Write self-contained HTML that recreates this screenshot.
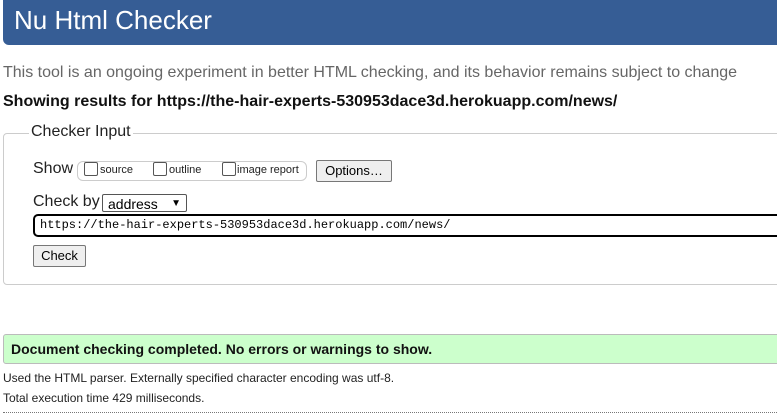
<!DOCTYPE html>
<html><head><style>
body{margin:0;width:777px;height:417px;overflow:hidden;background:#fff;font-family:"Liberation Sans",Arial,sans-serif;position:relative}
.a{position:absolute;white-space:nowrap}
</style></head><body>
<div class="a" style="left:3px;top:0;width:790px;height:45px;background:#365d95;border-radius:0 0 6px 6px"></div>
<div class="a" style="left:14px;top:5px;color:#fff;font-size:26px">Nu Html Checker</div>
<div class="a" style="left:3px;top:64px;color:#666;font-size:16px">This tool is an ongoing experiment in better HTML checking, and its behavior remains subject to change</div>
<div class="a" style="left:3px;top:93px;color:#111;font-size:16px;font-weight:bold">Showing results for https://the-hair-experts-530953dace3d.herokuapp.com/news/</div>
<div class="a" style="left:3px;top:133px;width:800px;height:150px;border:1px solid #ccc;border-radius:4px"></div>
<div class="a" style="left:29px;top:123px;background:#fff;padding:0 2px;font-size:16px;color:#222">Checker Input</div>
<div class="a" style="left:33px;top:160px;font-size:16px;color:#222">Show</div>
<div class="a" style="left:77px;top:161px;width:228px;height:18px;border:1px solid #ccc;border-radius:6px"></div>
<div class="a" style="left:84px;top:162px;width:12px;height:12px;border:1px solid #555;border-radius:2px"></div>
<div class="a" style="left:100px;top:164px;font-size:11px;color:#222">source</div>
<div class="a" style="left:153px;top:162px;width:12px;height:12px;border:1px solid #555;border-radius:2px"></div>
<div class="a" style="left:169px;top:164px;font-size:11px;color:#222">outline</div>
<div class="a" style="left:222px;top:162px;width:12px;height:12px;border:1px solid #555;border-radius:2px"></div>
<div class="a" style="left:237px;top:164px;font-size:11px;color:#222">image report</div>
<div class="a" style="left:316px;top:160px;width:74px;height:20px;border:1px solid #777;border-radius:2px;background:#efefef;font-size:13px;line-height:20px;text-align:center">Options…</div>
<div class="a" style="left:33px;top:193px;font-size:16px;color:#222">Check by</div>
<div class="a" style="left:102px;top:194px;height:18px;border:1px solid #555;border-radius:2px;font-size:14px;line-height:18px;padding-left:5px;box-sizing:border-box;width:85px">address<span style="position:absolute;right:5px;top:0;font-size:10px">&#9660;</span></div>
<div class="a" style="left:33px;top:214px;width:800px;height:23px;border:2px solid #000;border-radius:5px;box-sizing:border-box;font-family:'Liberation Mono',monospace;font-size:12px;line-height:19px;padding-left:5px">https://the-hair-experts-530953dace3d.herokuapp.com/news/</div>
<div class="a" style="left:33px;top:245px;width:51px;height:20px;border:1px solid #777;border-radius:2px;background:#efefef;font-size:13px;line-height:20px;text-align:center">Check</div>
<div class="a" style="left:3px;top:334px;width:800px;height:28px;background:#ccffcc;border:1px solid #bbb;border-radius:3px"></div>
<div class="a" style="left:11px;top:341px;font-size:14px;font-weight:bold;color:#111">Document checking completed. No errors or warnings to show.</div>
<div class="a" style="left:3px;top:371px;font-size:12px;color:#222">Used the HTML parser. Externally specified character encoding was utf-8.</div>
<div class="a" style="left:3px;top:391px;font-size:12px;color:#222">Total execution time 429 milliseconds.</div>
<div class="a" style="left:3px;top:412px;width:780px;border-top:1px dotted #777"></div>
</body></html>
